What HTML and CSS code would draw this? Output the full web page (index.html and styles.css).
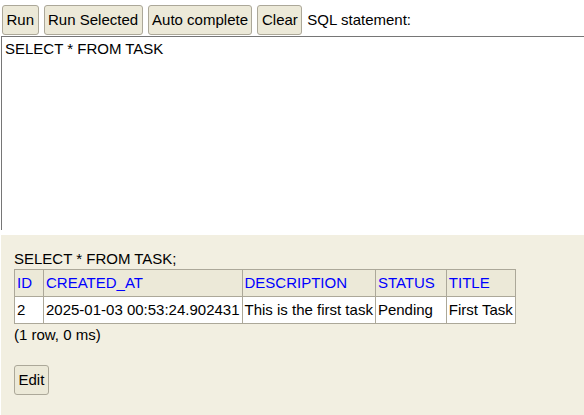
FILE: index.html
```html
<!DOCTYPE html>
<html>
<head>
<meta charset="utf-8">
<link rel="stylesheet" href="styles.css">
</head>
<body>
<div class="query-frame">
  <div class="toolbar">
    <button class="btn">Run</button>
    <button class="btn">Run Selected</button>
    <button class="btn">Auto complete</button>
    <button class="btn">Clear</button>
    <span class="label">SQL statement:</span>
  </div>
  <textarea class="sql">SELECT * FROM TASK</textarea>
</div>
<div class="result-frame">
  <div class="stmt">SELECT * FROM TASK;</div>
  <table class="result">
    <tr>
      <th><a href="#">ID</a></th>
      <th><a href="#">CREATED_AT</a></th>
      <th><a href="#">DESCRIPTION</a></th>
      <th><a href="#">STATUS</a></th>
      <th><a href="#">TITLE</a></th>
    </tr>
    <tr>
      <td>2</td>
      <td>2025-01-03 00:53:24.902431</td>
      <td>This is the first task</td>
      <td>Pending</td>
      <td>First Task</td>
    </tr>
  </table>
  <div class="info">(1 row, 0 ms)</div>
  <button class="btn edit">Edit</button>
</div>
</body>
</html>
```

FILE: styles.css
```css
html, body {
  margin: 0;
  padding: 0;
  background: #fff;
}
body {
  font-family: "Liberation Sans", Arial, sans-serif;
  font-size: 15px;
  color: #000;
  overflow: hidden;
}
.query-frame {
  height: 230px;
  overflow: hidden;
}
.toolbar {
  display: flex;
  align-items: center;
  gap: 5px;
  padding: 5px 0 1px 2px;
}
.btn {
  font-family: "Liberation Sans", Arial, sans-serif;
  font-size: 15px;
  line-height: 18px;
  color: #000;
  background: #ece9d8;
  border: 1px solid #aca899;
  border-radius: 3px;
  padding: 5px 3.5px;
  margin: 0;
}
.label {
  line-height: 18px;
}
.sql {
  display: block;
  margin: 0 0 0 1px;
  width: 700px;
  height: 260px;
  box-sizing: border-box;
  border: 1px solid #767676;
  padding: 3px 3px;
  font-family: "Liberation Sans", Arial, sans-serif;
  font-size: 15px;
  line-height: 18px;
  resize: none;
  outline: none;
}
.result-frame {
  margin: 5px 0 0 1px;
  height: 180px;
  background: #f2efe1;
  padding: 15px 13px 0;
  box-sizing: border-box;
}
.stmt {
  line-height: 18px;
  margin-bottom: 1px;
}
.result {
  border-collapse: collapse;
}
.result th, .result td {
  border: 1px solid #aca899;
  padding: 4px 2px;
  line-height: 18px;
  text-align: left;
  font-weight: normal;
  white-space: nowrap;
}
.result th {
  background: #ece9d8;
  padding-right: 11px;
}
.result td {
  background: #fff;
}
.result td.wide {
  padding-right: 4px;
}
.result th a {
  color: #0000ff;
  text-decoration: none;
}
.info {
  line-height: 18px;
  margin-top: 2px;
}
.edit {
  margin-top: 21px;
  padding: 5px 3.5px;
}
```
